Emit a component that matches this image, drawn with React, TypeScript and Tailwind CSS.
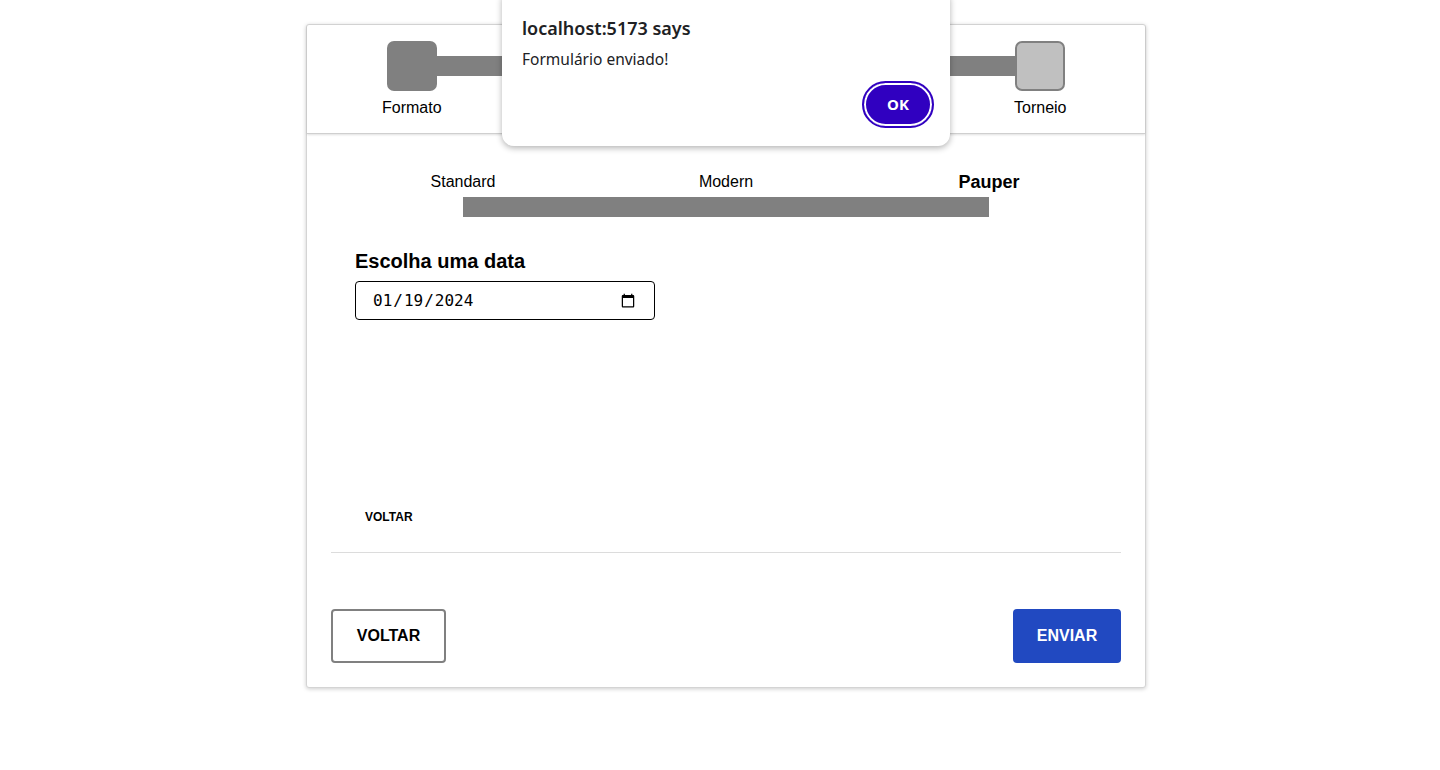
import React from 'react';

const STEPS = [
  { label: 'Formato', state: 'done' },
  { label: 'Data', state: 'done' },
  { label: 'Local', state: 'current' },
  { label: 'Torneio', state: 'todo' },
];

const FORMATS = ['Standard', 'Modern', 'Pauper'];

export default function App() {
  const [date, setDate] = React.useState('2024-01-19');

  return (
    <div className="relative min-h-[770px] overflow-hidden bg-white font-['Liberation_Sans',Arial,sans-serif] text-black">
      {/* ── Card ─────────────────────────────────────────────────────────── */}
      <div className="ml-[306px] mt-[24px] flex w-[840px] flex-col rounded-[3px] border border-[#d4d4d4] bg-white shadow-[0_1px_4px_rgba(0,0,0,0.2)]">
        {/* Stepper */}
        <div className="grid h-[109px] grid-cols-4 border-b border-[#cfcfcf] pt-[16px] shadow-[0_1px_2px_rgba(0,0,0,0.12)]">
          {STEPS.map((step, i) => (
            <div key={step.label} className="flex flex-col items-center">
              <div className="flex w-full items-center">
                <div className={`h-[20px] flex-1 ${i === 0 ? '' : 'bg-[#808080]'}`} />
                <div
                  className={`h-[50px] w-[50px] shrink-0 rounded-[7px] ${
                    step.state === 'todo' ? 'border-2 border-[#808080] bg-[#c0c0c0]' : 'bg-[#808080]'
                  }`}
                />
                <div className={`h-[20px] flex-1 ${i === STEPS.length - 1 ? '' : 'bg-[#808080]'}`} />
              </div>
              <span className="mt-[8px] text-[16px] leading-[18px]">{step.label}</span>
            </div>
          ))}
        </div>

        {/* Body */}
        <div className="px-[24px]">
          {/* Format slider */}
          <div className="mx-auto mt-[39px] w-[526px]">
            <div className="flex h-[18px] items-end justify-between">
              {FORMATS.map((f, i) => (
                <div key={f} className="flex w-0 justify-center">
                  <span
                    className={`whitespace-nowrap ${
                      i === FORMATS.length - 1 ? 'text-[18px] font-bold' : 'text-[16px]'
                    } leading-[18px]`}
                  >
                    {f}
                  </span>
                </div>
              ))}
            </div>
            <div className="mt-[6px] h-[20px] bg-[#808080]" />
          </div>

          {/* Date */}
          <div className="ml-[24px] mt-[32px]">
            <h2 className="text-[20px] font-bold leading-[24px]">Escolha uma data</h2>
            <input
              type="date"
              value={date}
              onChange={(e) => setDate(e.target.value)}
              className="mt-[8px] h-[39px] w-[300px] rounded-[4px] border border-black pl-[16px] pr-[16px] font-['DejaVu_Sans_Mono',monospace] text-[16px]"
            />
          </div>

          <button className="ml-[34px] mt-[190px] text-[12px] font-bold leading-[14px]">VOLTAR</button>

          <div className="mt-[24px] h-px bg-[#dcdcdc]" />

          {/* Actions */}
          <div className="mb-[24px] mt-[56px] flex items-center justify-between">
            <button className="h-[54px] w-[115px] rounded-[4px] border-2 border-[#808080] text-[16px] font-bold">
              VOLTAR
            </button>
            <button className="h-[54px] w-[108px] rounded-[4px] bg-[#2149c1] text-[16px] font-bold text-white">
              ENVIAR
            </button>
          </div>
        </div>
      </div>

      {/* ── Browser alert overlay ────────────────────────────────────────── */}
      <div className="absolute -top-[11px] left-[502px] w-[448px] rounded-[12px] bg-white pb-[20px] pl-[20px] pr-[18px] pt-[26px] font-['Noto_Sans',sans-serif] text-[#202124] shadow-[0_2px_6px_rgba(0,0,0,0.3)]">
        <p className="text-[18px] font-semibold leading-[26px]">localhost:5173 says</p>
        <p className="mt-[8px] text-[15.5px] leading-[20px]">Formulário enviado!</p>
        <div className="mt-[14px] flex justify-end">
          <button className="h-[43px] w-[68px] rounded-full bg-[#3000c0] text-[15px] font-bold text-white ring-2 ring-inset ring-white outline-2 outline-offset-0 outline-[#3000c0]">
            OK
          </button>
        </div>
      </div>
    </div>
  );
}
